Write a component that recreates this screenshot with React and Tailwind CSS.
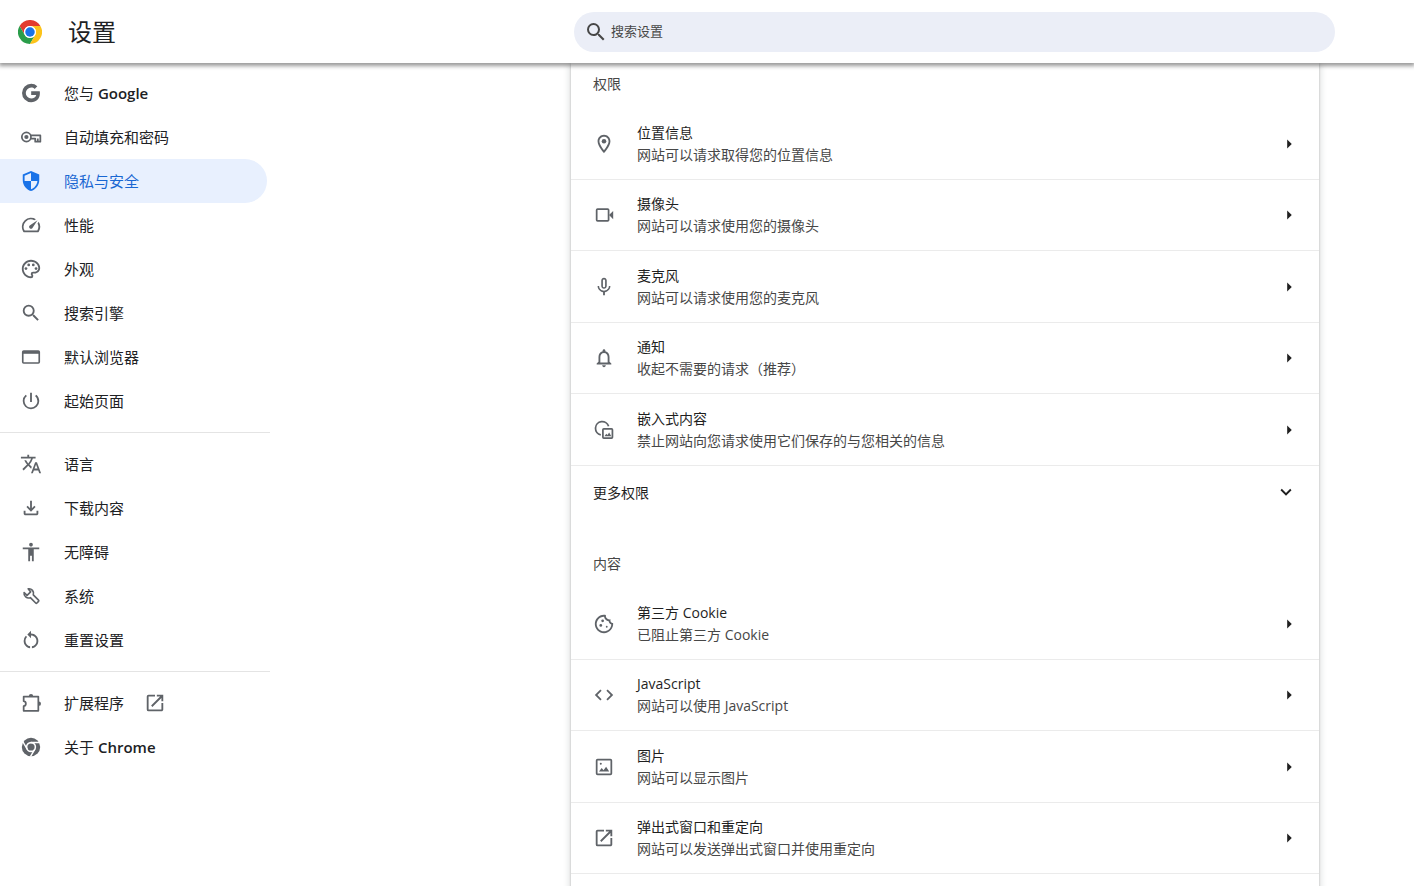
import {
  MdAccessibility,
  MdCode,
  MdExpandMore,
  MdMicNone,
  MdNotificationsNone,
  MdOpenInNew,
  MdOutlineCookie,
  MdOutlineFileDownload,
  MdOutlineLocationOn,
  MdOutlinePalette,
  MdPowerSettingsNew,
  MdRestartAlt,
  MdSearch,
  MdSecurity,
  MdSpeed,
  MdTranslate,
} from "react-icons/md";

function ChromeLogo() {
  return (
    <svg viewBox="0 0 48 48" className="h-6 w-6" aria-hidden="true">
      <path fill="#e33b2e" d="M3.2 12A24 24 0 0 1 44.8 12H24A12 12 0 0 0 13.6 30Z" />
      <path fill="#2a9d4a" d="M3.2 12 13.6 30A12 12 0 0 0 34.4 30L24 48A24 24 0 0 1 3.2 12Z" />
      <path fill="#fcc31a" d="M44.8 12H24A12 12 0 0 1 34.4 30L24 48A24 24 0 0 0 44.8 12Z" />
      <circle cx="24" cy="24" r="12" fill="#fff" />
      <circle cx="24" cy="24" r="9.5" fill="#1a73e8" />
    </svg>
  );
}

function GoogleIcon({ className }) {
  return (
    <svg viewBox="0 0 24 24" className={className} fill="currentColor" aria-hidden="true">
      <path d="M12.2 10.2v3.9h5.5c-.5 2.4-2.5 3.8-5.5 3.8a5.9 5.9 0 0 1 0-11.8c1.5 0 2.8.5 3.8 1.4l2.9-2.9A9.9 9.9 0 0 0 12.2 2a10 10 0 1 0 0 20c5.6 0 9.5-3.9 9.5-9.8 0-.7 0-1.3-.2-2z" />
    </svg>
  );
}

function KeyIcon({ className }) {
  return (
    <svg viewBox="0 0 24 24" className={className} fill="none" stroke="currentColor" strokeWidth="1.9" aria-hidden="true">
      <circle cx="7" cy="12" r="5" />
      <circle cx="7" cy="12" r="2.3" fill="currentColor" stroke="none" />
      <path strokeLinejoin="round" d="M11.8 10.3H22.2v6.8h-5.6v-3.4h-5M19.4 13.6v3.5" />
    </svg>
  );
}

function BrowserIcon({ className }) {
  return (
    <svg viewBox="0 0 24 24" className={className} fill="none" stroke="currentColor" strokeWidth="1.8" aria-hidden="true">
      <rect x="3" y="5.5" width="18" height="13" rx="1" />
      <path d="M3 7h18" strokeWidth="3" />
    </svg>
  );
}

function WrenchIcon({ className }) {
  return (
    <svg viewBox="0 0 24 24" className={className} fill="none" stroke="currentColor" strokeWidth="1.8" strokeLinejoin="round" aria-hidden="true">
      <path d="M8.9 4.2a5 5 0 0 1 5.6 6.6l5.7 5.7a1 1 0 0 1 0 1.4l-1.7 1.7a1 1 0 0 1-1.4 0l-5.8-5.8a5 5 0 0 1-6.8-5.6l3.2 3.2 3.9-3.9z" />
    </svg>
  );
}

function ExtensionIcon({ className }) {
  return (
    <svg viewBox="0 0 24 24" className={className} fill="none" stroke="currentColor" strokeWidth="1.9" aria-hidden="true">
      <path strokeLinejoin="round" d="M4 5h16v15.5H4v-5c3.2-.6 3.2-4.9 0-5.5z" />
      <path fill="currentColor" stroke="none" d="M9.6 4.5a2.4 2.4 0 0 1 4.8 0zM20.5 10.3a2.4 2.4 0 0 1 0 4.8z" />
    </svg>
  );
}

function ChromeIcon({ className }) {
  return (
    <svg viewBox="0 0 24 24" className={className} aria-hidden="true">
      <circle cx="12" cy="12" r="10" fill="currentColor" />
      <circle cx="12" cy="12" r="4.8" fill="none" stroke="#fff" strokeWidth="1.7" />
      <path fill="none" stroke="#fff" strokeWidth="1.6" d="M12 7.2h9.8M7.8 14.4 3 6M16.2 14.4 11.4 22.6" />
    </svg>
  );
}

function CameraIcon({ className }) {
  return (
    <svg viewBox="0 0 24 24" className={className} aria-hidden="true">
      <rect x="4" y="5.5" width="13" height="13" rx="1" fill="none" stroke="currentColor" strokeWidth="1.9" />
      <path fill="currentColor" d="m17.5 12 4.5-4.5v9z" />
    </svg>
  );
}

function EmbedIcon({ className }) {
  return (
    <svg viewBox="0 0 24 24" className={className} fill="none" stroke="currentColor" strokeWidth="1.9" aria-hidden="true">
      <path d="M8.5 17.3A7.3 7.3 0 1 1 17 8" />
      <rect x="10.8" y="10.8" width="10.4" height="10" rx="1" />
      <path fill="currentColor" stroke="none" d="m12.5 18.8 2-2.8 1.3 1.5 1.8-2.7 2.4 4z" />
    </svg>
  );
}

function PictureIcon({ className }) {
  return (
    <svg viewBox="0 0 24 24" className={className} fill="none" stroke="currentColor" strokeWidth="1.9" aria-hidden="true">
      <rect x="4" y="4" width="16" height="16" rx="1" />
      <circle cx="8.5" cy="8.5" r="1.1" fill="currentColor" stroke="none" />
      <path fill="currentColor" stroke="none" d="m6.5 17 3-4 2 2.5 2.8-3.8 3.4 5.3z" />
    </svg>
  );
}

function ArrowRight() {
  return (
    <svg viewBox="0 0 24 24" className="h-[22px] w-[22px] shrink-0 text-[#1f1f1f]" fill="currentColor" aria-hidden="true">
      <path d="m10 7 5 5-5 5z" />
    </svg>
  );
}

const navGroups = [
  [
    { label: "您与", latin: "Google", icon: GoogleIcon },
    { label: "自动填充和密码", icon: KeyIcon },
    { label: "隐私与安全", icon: MdSecurity, active: true },
    { label: "性能", icon: MdSpeed },
    { label: "外观", icon: MdOutlinePalette },
    { label: "搜索引擎", icon: MdSearch },
    { label: "默认浏览器", icon: BrowserIcon },
    { label: "起始页面", icon: MdPowerSettingsNew },
  ],
  [
    { label: "语言", icon: MdTranslate },
    { label: "下载内容", icon: MdOutlineFileDownload },
    { label: "无障碍", icon: MdAccessibility },
    { label: "系统", icon: WrenchIcon },
    { label: "重置设置", icon: MdRestartAlt },
  ],
  [
    { label: "扩展程序", icon: ExtensionIcon, external: true },
    { label: "关于", latin: "Chrome", icon: ChromeIcon },
  ],
];

const permissions = [
  { title: "位置信息", sub: "网站可以请求取得您的位置信息", icon: MdOutlineLocationOn },
  { title: "摄像头", sub: "网站可以请求使用您的摄像头", icon: CameraIcon },
  { title: "麦克风", sub: "网站可以请求使用您的麦克风", icon: MdMicNone },
  { title: "通知", sub: "收起不需要的请求（推荐）", icon: MdNotificationsNone },
  { title: "嵌入式内容", sub: "禁止网站向您请求使用它们保存的与您相关的信息", icon: EmbedIcon },
];

const contents = [
  { title: "第三方 Cookie", sub: "已阻止第三方 Cookie", icon: MdOutlineCookie },
  { title: "JavaScript", sub: "网站可以使用 JavaScript", icon: MdCode },
  { title: "图片", sub: "网站可以显示图片", icon: PictureIcon },
  { title: "弹出式窗口和重定向", sub: "网站可以发送弹出式窗口并使用重定向", icon: MdOpenInNew },
];

function NavItem({ label, latin, icon: Icon, active, external }) {
  return (
    <a
      href="#"
      aria-current={active ? "page" : undefined}
      className={`mr-[3px] flex h-[44px] items-center rounded-r-full pl-5 text-[15px] ${
        active ? "bg-[#e8f0fe] text-[#1967d2]" : "text-[#202124]"
      }`}
    >
      <Icon className={`h-[22px] w-[22px] shrink-0 ${active ? "text-[#1a73e8]" : "text-[#5f6368]"}`} />
      <span className="ml-[22px]">
        {label}
        {latin && <span className="font-semibold"> {latin}</span>}
      </span>
      {external && <MdOpenInNew className="ml-5 h-[22px] w-[22px] text-[#5f6368]" />}
    </a>
  );
}

function SectionTitle({ children }) {
  return <h2 className="flex h-[45px] items-center pb-1 pl-[22px] text-[#474747]">{children}</h2>;
}

function SettingList({ items }) {
  return (
    <ul>
      {items.map(({ title, sub, icon: Icon }) => (
        <li key={title} className="border-b border-[#ebebeb] odd:h-[72px] even:h-[71px]">
          <button type="button" className="flex h-full w-full items-center gap-[22px] pl-[22px] pr-[19px] text-left">
            <Icon className="h-[22px] w-[22px] shrink-0 text-[#5f6368]" />
            <span className="flex flex-1 flex-col leading-[22px]">
              <span className="text-[#1f1f1f]">{title}</span>
              <span className="text-[#474747]">{sub}</span>
            </span>
            <ArrowRight />
          </button>
        </li>
      ))}
    </ul>
  );
}

export default function App() {
  return (
    <div className="flex h-screen flex-col overflow-hidden bg-white font-['Open_Sans','Noto_Sans_CJK_SC',sans-serif] text-[14px] text-[#1f1f1f]">
      <header className="z-10 flex h-[63px] shrink-0 items-center bg-white shadow-[0_2px_4px_1px_rgba(0,0,0,0.4)]">
        <div className="flex w-[574px] shrink-0 items-center gap-[26px] pl-[18px]">
          <ChromeLogo />
          <h1 className="text-[24px] leading-8 text-[#202124]">设置</h1>
        </div>
        <div className="mr-[79px] flex h-10 flex-1 items-center rounded-full bg-[#ebeef7] pl-2.5">
          <MdSearch className="h-6 w-6 shrink-0 text-[#474747]" />
          <input
            type="search"
            aria-label="搜索设置"
            placeholder="搜索设置"
            className="ml-[3px] flex-1 bg-transparent text-[13px] outline-none placeholder:text-[#474747]"
          />
        </div>
      </header>

      <div className="flex min-h-0 flex-1">
        <nav className="w-[270px] shrink-0 overflow-hidden pt-2">
          {navGroups.map((group, i) => (
            <div key={i} className={i > 0 ? "mt-[9px] border-t border-[#e4e4e4] pt-[9px]" : ""}>
              {group.map((item) => (
                <NavItem key={item.label} {...item} />
              ))}
            </div>
          ))}
        </nav>

        <main className="flex-1 overflow-hidden pl-[301px] pr-[95px]">
          <div className="min-h-full bg-white shadow-[0_1px_2px_0_rgba(60,64,67,0.3),0_2px_6px_2px_rgba(60,64,67,0.15)]">
            <SectionTitle>权限</SectionTitle>
            <SettingList items={permissions} />
            <button type="button" className="mb-[25px] flex h-[52px] w-full items-center justify-between px-[22px]">
              更多权限
              <MdExpandMore className="h-[22px] w-[22px]" />
            </button>
            <SectionTitle>内容</SectionTitle>
            <SettingList items={contents} />
            <div className="h-20" />
          </div>
        </main>
      </div>
    </div>
  );
}
